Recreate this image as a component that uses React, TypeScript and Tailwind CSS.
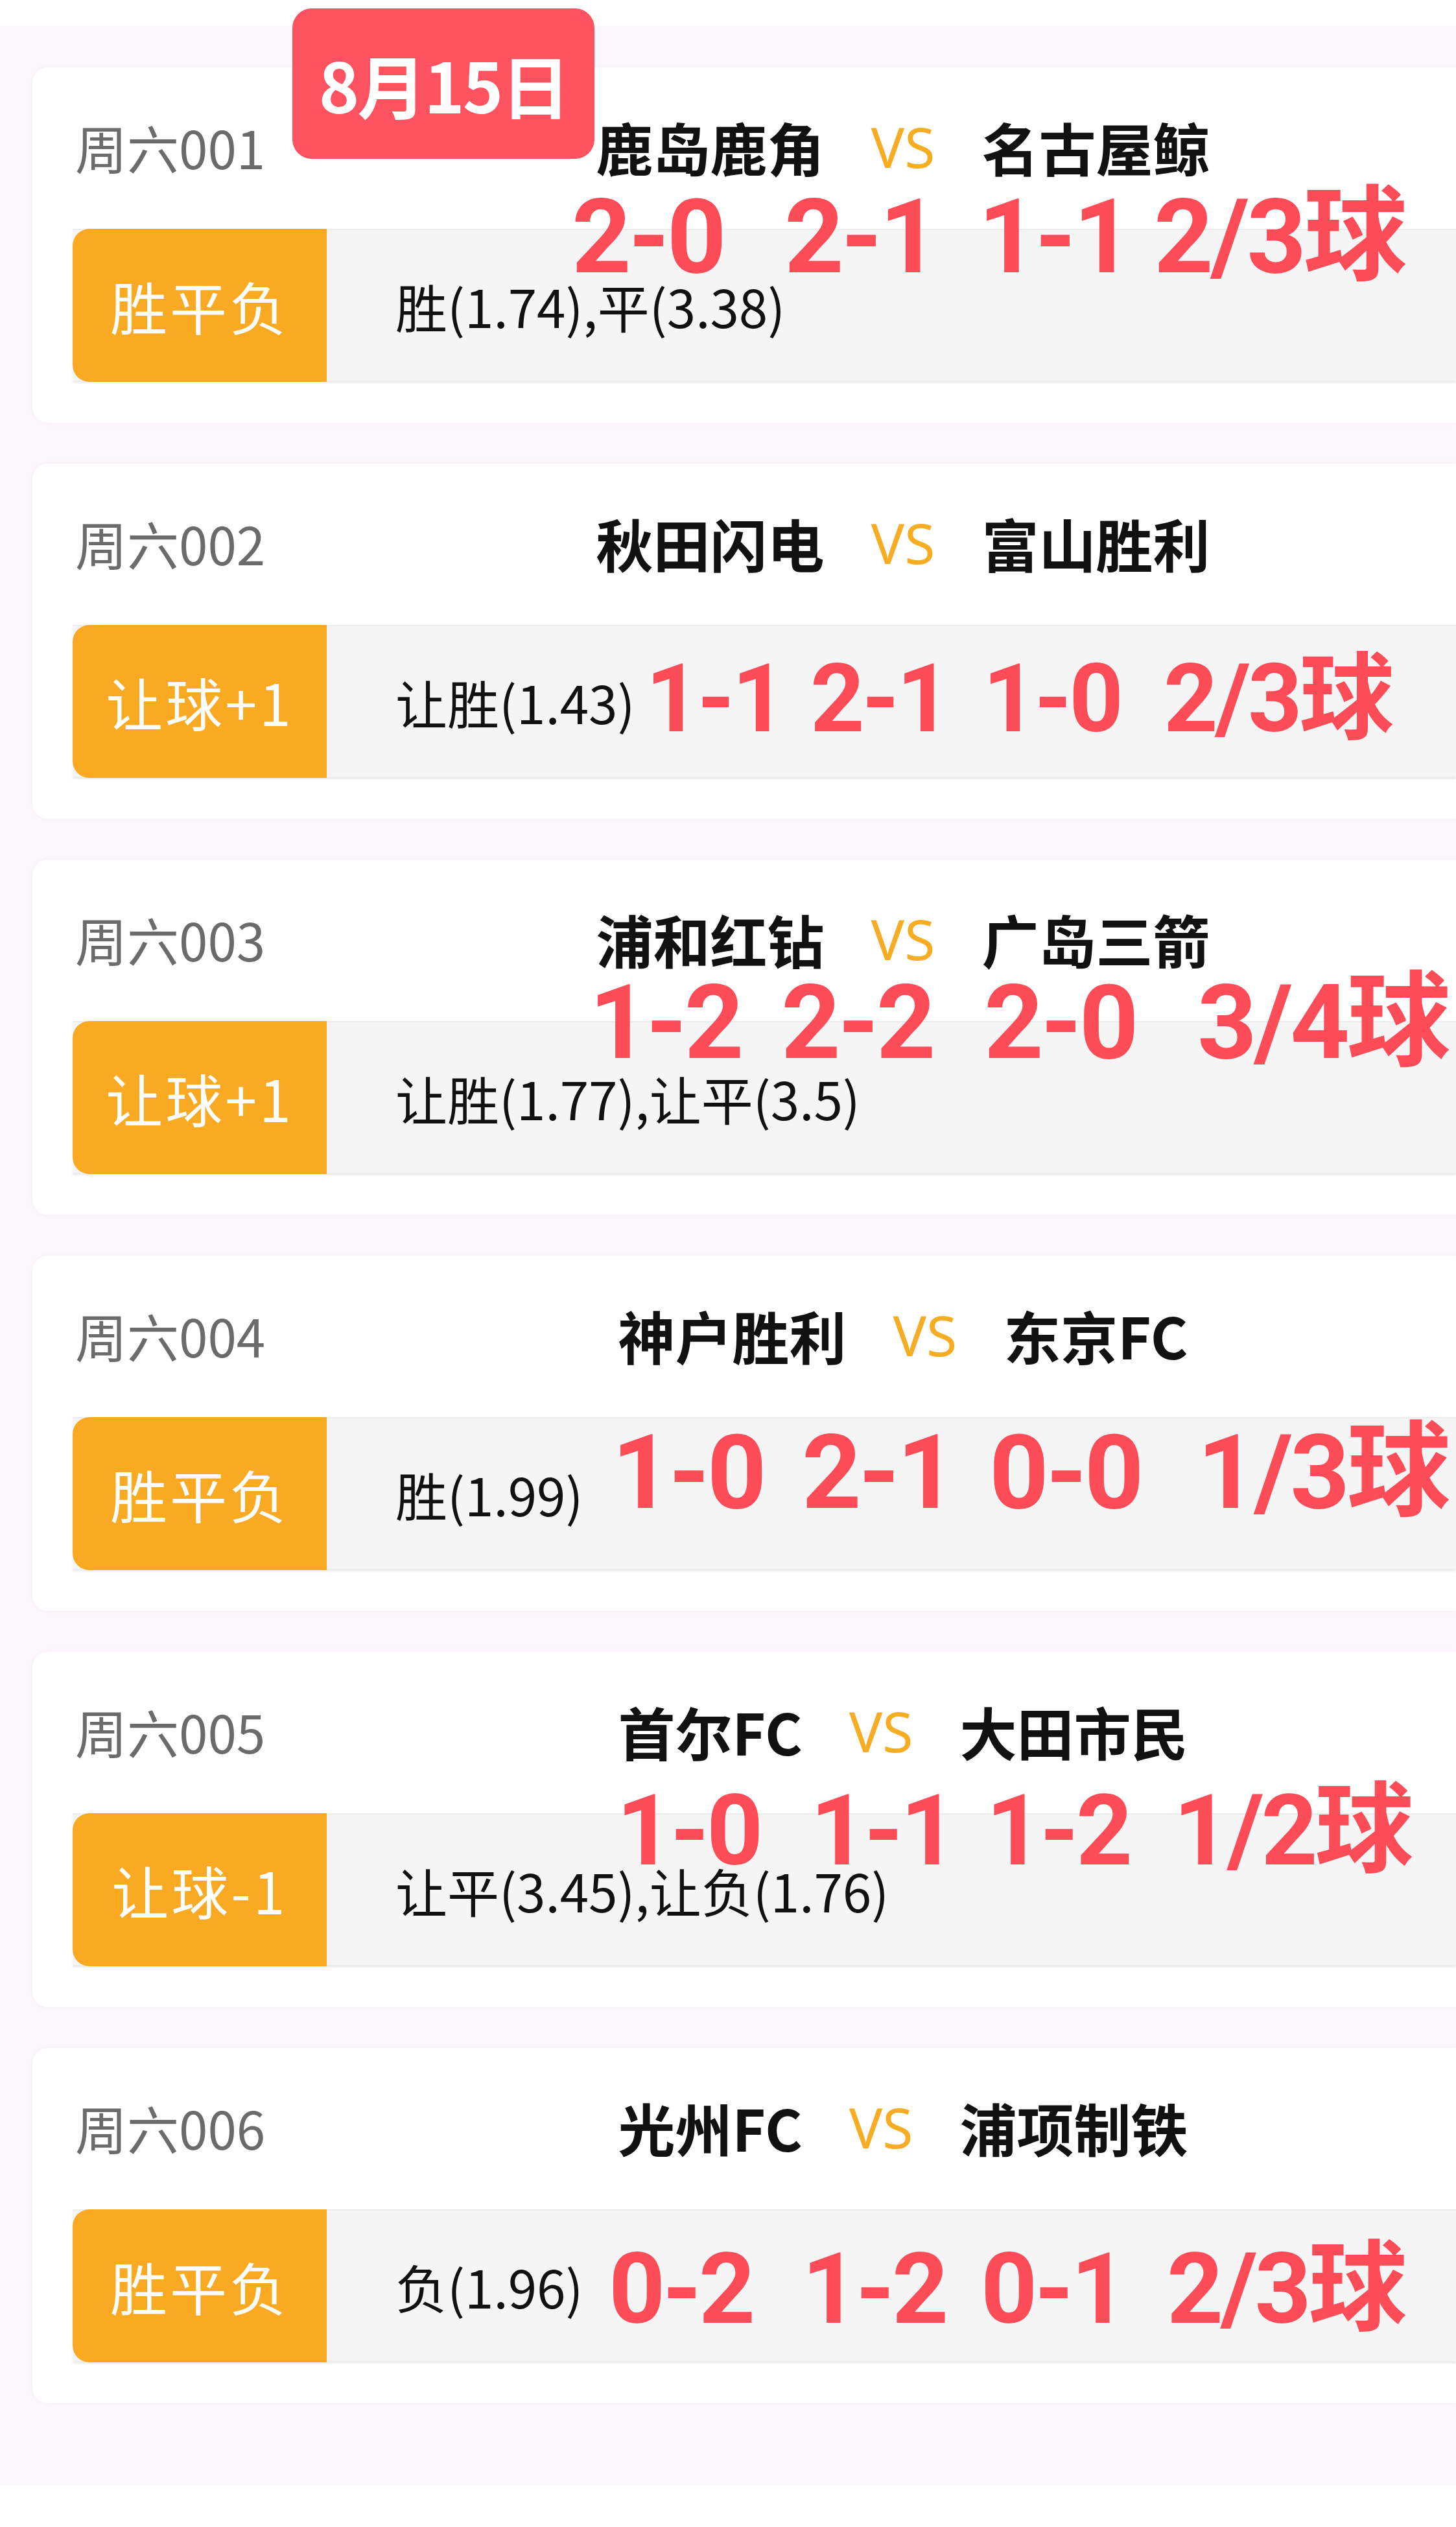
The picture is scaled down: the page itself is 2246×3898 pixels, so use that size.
import React from 'react';

type Match = {
  code: string;
  home: string;
  away: string;
  kind: string;
  odds: string;
  // red hand-written picks over the card: text + x where it starts
  picks: [string, number][];
  pickY: number;
  pickSize: number;
};

const MATCHES: Match[] = [
  { code: '周六001', home: '鹿岛鹿角', away: '名古屋鲸', kind: '胜平负', odds: '胜(1.74),平(3.38)', picks: [['2-0', 838], ['2-1', 1166], ['1-1', 1465], ['2/3球', 1736]], pickY: 260, pickSize: 160 },
  { code: '周六002', home: '秋田闪电', away: '富山胜利', kind: '让球+1', odds: '让胜(1.43)', picks: [['1-1', 952], ['2-1', 1206], ['1-0', 1472], ['2/3球', 1751]], pickY: 363, pickSize: 146 },
  { code: '周六003', home: '浦和红钻', away: '广岛三箭', kind: '让球+1', odds: '让胜(1.77),让平(3.5)', picks: [['1-2', 865], ['2-2', 1161], ['2-0', 1474], ['3/4球', 1803]], pickY: 250, pickSize: 160 },
  { code: '周六004', home: '神户胜利', away: '东京FC', kind: '胜平负', odds: '胜(1.99)', picks: [['1-0', 900], ['2-1', 1193], ['0-0', 1482], ['1/3球', 1803]], pickY: 333, pickSize: 160 },
  { code: '周六005', home: '首尔FC', away: '大田市民', kind: '让球-1', odds: '让平(3.45),让负(1.76)', picks: [['1-0', 907], ['1-1', 1206], ['1-2', 1477], ['1/2球', 1766]], pickY: 274, pickSize: 152 },
  { code: '周六006', home: '光州FC', away: '浦项制铁', kind: '胜平负', odds: '负(1.96)', picks: [['0-2', 895], ['1-2', 1193], ['0-1', 1469], ['2/3球', 1756]], pickY: 370, pickSize: 152 },
];

const CJK = "font-['Noto_Sans_CJK_SC','Noto_Sans',sans-serif]";

function MatchCard({ m }: { m: Match }) {
  return (
    <div className="relative ml-[50px] h-[548px] rounded-l-[24px] bg-white pl-[62px] pt-[67px] shadow-[0_0_6px_rgba(200,180,200,0.12)]">
      {/* header: code + teams */}
      <div className="flex h-[110px] items-center whitespace-nowrap">
        <div className="w-[428px] pl-[4px] text-[80px] leading-none text-[#6b6b6b]">{m.code}</div>
        <div className="flex w-[1706px] items-center justify-center gap-[72px] text-[88px] leading-none">
          <span className="font-bold text-[#111]">{m.home}</span>
          <span className="font-['Noto_Sans',sans-serif] text-[86px] text-[#f6ad24]">VS</span>
          <span className="font-bold text-[#111]">{m.away}</span>
        </div>
      </div>

      {/* play type + odds bar */}
      <div className="mt-[72px] flex h-[234px] border-t-2 border-[#ececec] bg-[#f5f5f5] shadow-[0_4px_2px_rgba(0,0,0,0.07)]">
        <div className="-mt-[2px] flex h-[236px] w-[392px] items-center justify-center rounded-l-[26px] bg-[#f9a922] text-[88px] tracking-[4px] text-white">
          {m.kind}
        </div>
        <div className="flex items-center whitespace-nowrap pl-[106px] text-[80px] text-[#111]">{m.odds}</div>
      </div>

      {/* red picks written over the card */}
      {m.picks.map(([text, x], i) => (
        <span
          key={i}
          className="absolute whitespace-nowrap font-['Roboto','Noto_Sans_CJK_SC',sans-serif] font-bold leading-none tracking-[-4px] text-[#fb4c58]"
          style={{ left: x - 6, top: m.pickY - m.pickSize * 0.49, fontSize: m.pickSize }}
        >
          {text}
        </span>
      ))}
    </div>
  );
}

export default function App() {
  return (
    <div className={`${CJK} relative w-[2246px] overflow-hidden bg-white`}>
      <div className="h-[40px] bg-white" />
      <div className="flex flex-col gap-[63px] bg-[#fcf7fc] pb-[126px] pt-[64px]">
        {MATCHES.map((m) => (
          <MatchCard key={m.code} m={m} />
        ))}
      </div>
      <div className="h-[65px] bg-white" />

      {/* date badge */}
      <div className="absolute left-[451px] top-[13px] flex h-[232px] w-[466px] items-center justify-center rounded-[30px] bg-[#fd525f] text-[106px] font-bold tracking-[-3px] text-white">
        8月15日
      </div>
    </div>
  );
}
